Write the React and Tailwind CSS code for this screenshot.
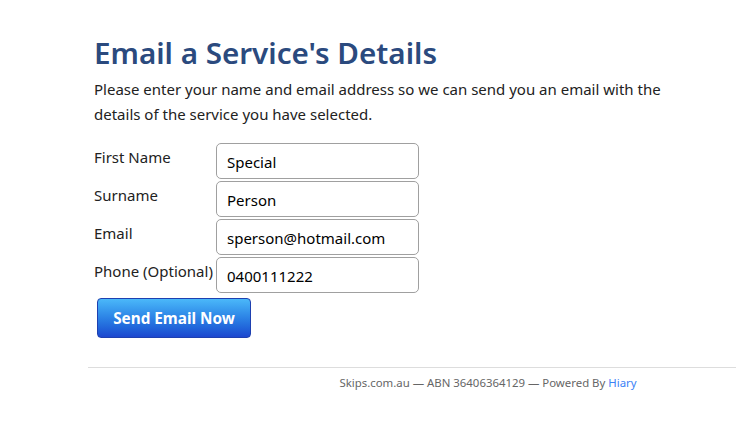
export default function App() {
  const fields = [
    { label: "First Name", value: "Special" },
    { label: "Surname", value: "Person" },
    { label: "Email", value: "sperson@hotmail.com" },
    { label: "Phone (Optional)", value: "0400111222" },
  ];

  return (
    <div className="w-full h-[442px] overflow-hidden bg-white" style={{ fontFamily: '"Noto Sans", sans-serif' }}>
      <div className="w-[800px] ml-[88px]">
        <div className="px-[6px] pt-[33px]">
          <h1 className="text-[29.6px] leading-[40px] font-semibold text-[#2b4a7e]">Email a Service's Details</h1>
          <p className="mt-[4px] text-[15px] leading-[25px] text-[#222] w-[590px]">
            Please enter your name and email address so we can send you an email with the details of the service you have selected.
          </p>

          {/* Form */}
          <div className="mt-[16px] flex flex-col gap-[2px]">
            {fields.map((f) => (
              <div key={f.label} className="flex items-start">
                <label className="w-[122px] pt-[4px] text-[15px] leading-[20px] text-[#222]">{f.label}</label>
                <input
                  readOnly
                  value={f.value}
                  className="w-[203px] h-[36px] px-[10px] pt-[1px] border border-[#a0a0a0] rounded-[5px] text-[15px] text-black outline-none"
                />
              </div>
            ))}
          </div>

          <button className="mt-[5px] ml-[3px] w-[154px] h-[40px] rounded-[4px] border border-[#1e40b0] bg-gradient-to-b from-[#4bb8f9] to-[#1d47cf] text-white font-bold text-[15.3px]">
            Send Email Now
          </button>
        </div>

        <div className="mt-[29px] border-t border-[#dddddd]">
          <p className="pt-[6px] text-center text-[11.4px] text-[#666]">
            Skips.com.au — ABN 36406364129 — Powered By <span className="text-[#3b82f6]">Hiary</span>
          </p>
        </div>
      </div>
    </div>
  );
}
